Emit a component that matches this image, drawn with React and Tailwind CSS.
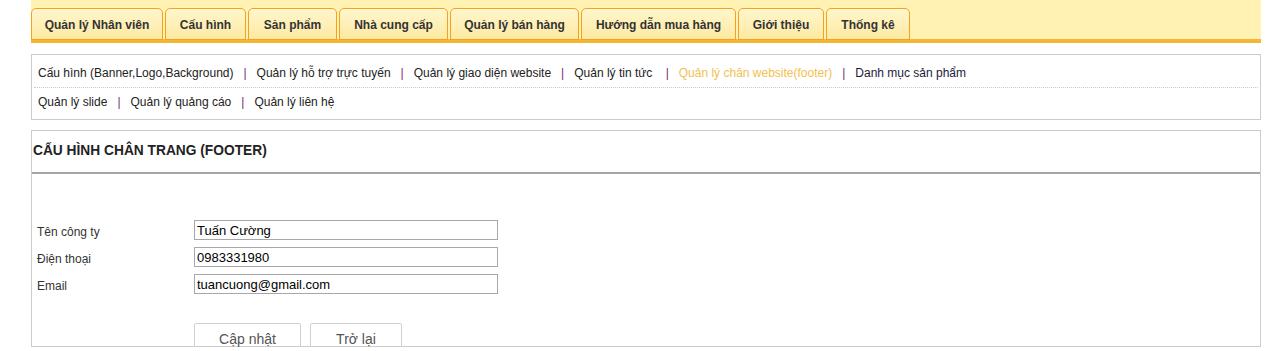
import React from "react";

const tabs = [
  { label: "Quản lý Nhân viên", w: "w-[132px]" },
  { label: "Cấu hình", w: "w-[81px]" },
  { label: "Sản phẩm", w: "w-[89px]" },
  { label: "Nhà cung cấp", w: "w-[109px]" },
  { label: "Quản lý bán hàng", w: "w-[129px]" },
  { label: "Hướng dẫn mua hàng", w: "w-[155px]" },
  { label: "Giới thiệu", w: "w-[86px]" },
  { label: "Thống kê", w: "w-[84px]" },
];

const menuRow1 = [
  "Cấu hình (Banner,Logo,Background)",
  "Quản lý hỗ trợ trực tuyến",
  "Quản lý giao diện website",
  "Quản lý tin tức ",
  "Quản lý chân website(footer)",
  "Danh mục sản phẩm",
];

const menuRow2 = ["Quản lý slide", "Quản lý quảng cáo", "Quản lý liên hệ"];

const fields = [
  { label: "Tên công ty", value: "Tuấn Cường" },
  { label: "Điện thoại", value: "0983331980" },
  { label: "Email", value: "tuancuong@gmail.com" },
];

const MenuRow = ({ items, active }) => (
  <div className="flex items-center text-[12px] whitespace-pre">
    {items.map((item, index) => (
      <React.Fragment key={item}>
        {index > 0 && <span className="px-[10px] text-[#7b2a7b]">|</span>}
        <a
          href="#"
          className={
            item === active
              ? "text-[#f2c14e]"
              : item === "Danh mục sản phẩm"
              ? "text-[#1c1a3a]"
              : "text-[#222]"
          }
        >
          {item}
        </a>
      </React.Fragment>
    ))}
  </div>
);

export default function App() {
  return (
    <div className="ml-[31px] w-[1230px] font-['Liberation_Sans',Arial,sans-serif] text-[#222]">
      {/* top tabs */}
      <div className="h-[43px] bg-[#fff2b3] border-b-4 border-[#f4b733] pt-[8px] flex items-start gap-[2px]">
        {tabs.map((tab) => (
          <a
            key={tab.label}
            href="#"
            className={`${tab.w} h-[32px] pt-[1px] flex items-center justify-center rounded-t-[5px] border border-[#f7a01e] bg-linear-to-b from-[#fff6cc] to-[#fde9a2] text-[12px] font-bold text-[#333]`}
          >
            {tab.label}
          </a>
        ))}
      </div>

      {/* sub menu */}
      <div className="mt-[11px] border border-[#ccc]">
        <div className="h-[33px] mx-[2px] px-[4px] pt-[3px] flex items-center border-b border-dotted border-[#c8c8c8]">
          <MenuRow items={menuRow1} active="Quản lý chân website(footer)" />
        </div>
        <div className="h-[31px] px-[6px] pb-[4px] flex items-center">
          <MenuRow items={menuRow2} />
        </div>
      </div>

      {/* form panel */}
      <div className="mt-[10px] h-[217px] border border-[#ccc]">
        <div className="h-[43px] pt-[10px] pl-[1px] border-b-2 border-[#a6a6a6]">
          <h2 className="text-[13.75px] leading-[20px] font-bold text-[#222]">
            CẤU HÌNH CHÂN TRANG (FOOTER)
          </h2>
        </div>

        <div className="pt-[46px] pl-[5px] flex flex-col gap-[7px]">
          {fields.map((field) => (
            <div key={field.label} className="flex items-center h-[20px]">
              <label className="w-[157px] pt-[3px] text-[12px] text-[#333]">{field.label}</label>
              <input
                type="text"
                defaultValue={field.value}
                className="w-[304px] h-[20px] border border-[#a8a8a8] px-[2px] text-[13px] text-black outline-none"
              />
            </div>
          ))}
        </div>

        <div className="mt-[29px] pl-[162px] flex gap-[9px]">
          <button className="w-[107px] h-[30px] border border-[#d0d0d0] rounded-t-[2px] pt-[2px] text-[14px] text-[#555]">
            Cập nhật
          </button>
          <button className="w-[92px] h-[30px] border border-[#d0d0d0] rounded-t-[2px] pt-[2px] text-[14px] text-[#555]">
            Trở lại
          </button>
        </div>
      </div>
    </div>
  );
}
